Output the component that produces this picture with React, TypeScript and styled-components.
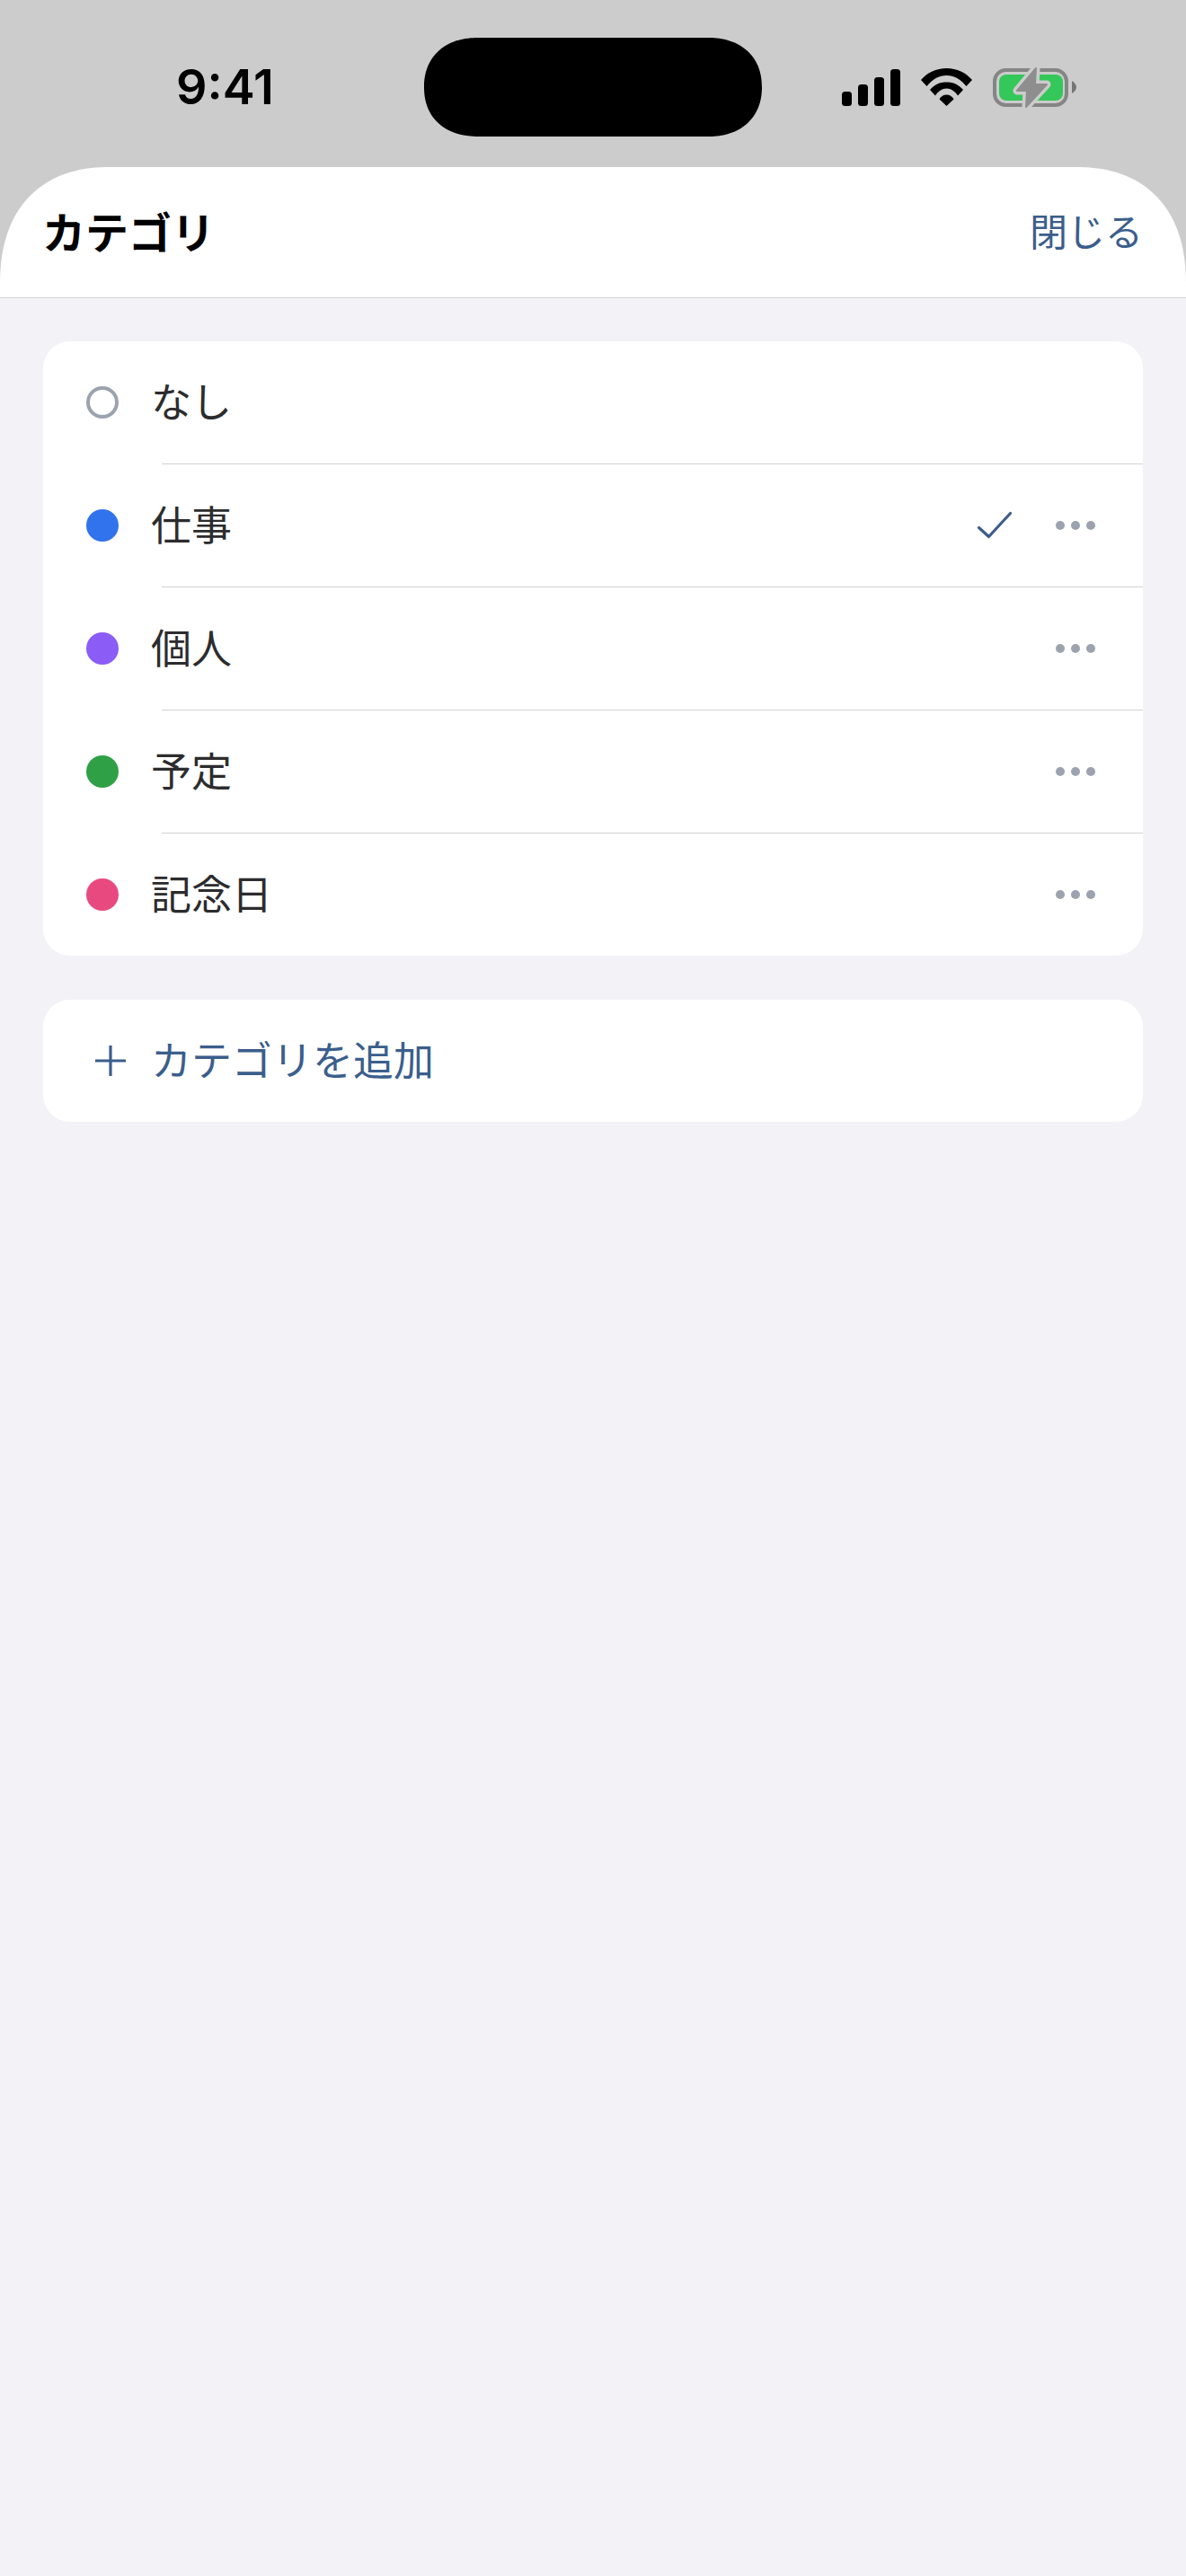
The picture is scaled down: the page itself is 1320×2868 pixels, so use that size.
import React from "react";
import styled, { createGlobalStyle } from "styled-components";

const Global = createGlobalStyle`
  html, body { margin: 0; padding: 0; background: #f2f2f7; }
  * { box-sizing: border-box; }
`;

const CJK = `"Noto Sans CJK JP", "Noto Sans", sans-serif`;

const Screen = styled.div`
  width: 1320px;
  height: 2868px;
  background: #f2f2f7;
  display: flex;
  flex-direction: column;
  font-family: ${CJK};
  overflow: hidden;
`;

const Top = styled.div`
  background: #cccccc;
`;

const StatusBar = styled.div`
  height: 186px;
  padding-top: 42px;
  display: grid;
  grid-template-columns: 472px 376px 1fr;
  grid-template-rows: 110px;
  align-items: center;
`;

const Time = styled.div`
  padding-left: 196px;
  font-family: Inter, "Liberation Sans", sans-serif;
  font-size: 54px;
  font-weight: 600;
  line-height: 1;
  color: #000;
`;

const Island = styled.div`
  width: 376px;
  height: 110px;
  background: #000;
  border-radius: 60px / 55px;
  corner-shape: superellipse(1.15);
`;

const StatusIcons = styled.div`
  padding-left: 89px;
  display: flex;
  align-items: center;
`;

const Header = styled.header`
  height: 145px;
  background: #fff;
  border-radius: 122px 122px 0 0 / 130px 130px 0 0;
  corner-shape: superellipse(1.2);
  display: flex;
  align-items: center;
  justify-content: space-between;
  padding: 0 48px 0 47px;
`;

const HeaderRule = styled.div`
  height: 1px;
  background: #d1d1d6;
`;

const Title = styled.h1`
  margin: 0 0 6px;
  font-size: 48px;
  font-weight: 700;
  line-height: 1;
  color: #000;
`;

const CloseButton = styled.button`
  border: 0;
  padding: 0 0 5px;
  background: none;
  font-family: ${CJK};
  font-size: 42px;
  line-height: 1;
  color: #3b5e8c;
`;

const Content = styled.main`
  padding: 48px 48px 0;
  display: flex;
  flex-direction: column;
  gap: 49px;
`;

const Card = styled.section`
  background: #fff;
  border-radius: 30px;
  overflow: hidden;
`;

const Row = styled.div`
  height: 136px;
  display: flex;
  align-items: center;
  padding: 0 53px 0 48px;
`;

const Dot = styled.span<{ $color?: string }>`
  width: 36px;
  height: 36px;
  border-radius: 50%;
  flex: none;
  background: ${(p) => p.$color ?? "transparent"};
  border: ${(p) => (p.$color ? "none" : "4px solid #9ca3af")};
`;

const Label = styled.span`
  margin-left: 36px;
  padding-bottom: 6px;
  font-size: 45px;
  line-height: 1;
  color: #2c2c2e;
`;

const Trailing = styled.div`
  margin-left: auto;
  display: flex;
  align-items: center;
  gap: 48px;
`;

const MoreDots = styled.div`
  display: flex;
  gap: 7px;
`;

const MoreDot = styled.span`
  width: 10px;
  height: 10px;
  border-radius: 50%;
  background: #9ca3af;
`;

const Separator = styled.div`
  height: 1px;
  margin-left: 132px;
  background: #d1d1d6;
`;

const AddRow = styled.div`
  height: 136px;
  display: flex;
  align-items: center;
  padding-left: 58px;
  gap: 28px;
`;

const AddLabel = styled.span`
  padding-bottom: 6px;
  font-size: 45px;
  line-height: 1;
  color: #3b5e8c;
`;

const Signal = () => (
  <svg width="65" height="41" viewBox="0 0 65 41" style={{ display: "block" }}>
    <rect x="0" y="25" width="11" height="16" rx="3.5" />
    <rect x="18" y="17" width="11" height="24" rx="3.5" />
    <rect x="36" y="9" width="11" height="32" rx="3.5" />
    <rect x="54" y="0" width="11" height="41" rx="3.5" />
  </svg>
);

const Wifi = () => (
  <svg width="57" height="42" viewBox="0 0 57 42" style={{ display: "block", marginLeft: 23 }}>
    <path d="M0 13C7 5 17 0 28.500 0S50 5 57 13L50.500 20C44 12 37 8 28.500 8S13 12 6.500 20Z" />
    <path d="M10 24C15 18 21 15.500 28.500 15.500S42 18 47 24L41 30.500C38 26 33.500 22.500 28.500 22.500S19 26 16 30.500Z" />
    <path d="M20.500 34.500C22.500 31 25 29.500 28.500 29.500S34.500 31 36.500 34.500L28.500 42Z" />
  </svg>
);

const Battery = () => (
  <svg width="93" height="48" viewBox="0 0 93 48" style={{ display: "block", marginLeft: 23 }}>
    <rect x="2" y="5" width="80" height="39" rx="12.500" fill="none" stroke="#858585" strokeWidth="4" />
    <rect x="7" y="10" width="71" height="29" rx="8" fill="#34c759" />
    <path d="M88 17C91 19 93 21 93 24S91 29 88 31Z" fill="#757575" />
    <path
      d="M48 3L27 28H38L37 46L60 21H47Z"
      fill="#cccccc"
      stroke="#cccccc"
      strokeWidth="9"
      strokeLinejoin="round"
    />
    <path
      d="M48 3L27 28H38L37 46L60 21H47Z"
      fill="#8e8e8e"
      stroke="#8e8e8e"
      strokeWidth="2"
      strokeLinejoin="round"
    />
  </svg>
);

const Check = () => (
  <svg width="40" height="32" viewBox="0 0 40 32" fill="none" style={{ display: "block" }}>
    <path d="M2.500 18.500L13.500 28.500L37.500 2.500" stroke="#3b5e8c" strokeWidth="3.200" strokeLinecap="round" strokeLinejoin="round" />
  </svg>
);

const Plus = () => (
  <svg width="34" height="34" viewBox="0 0 34 34" style={{ display: "block" }}>
    <path d="M0 17H34M17 0V34" stroke="#3b5e8c" strokeWidth="3.200" />
  </svg>
);

const categories = [
  { name: "なし" },
  { name: "仕事", color: "#3173ed", selected: true, more: true },
  { name: "個人", color: "#8b5cf6", more: true },
  { name: "予定", color: "#30a046", more: true },
  { name: "記念日", color: "#e84a80", more: true },
];

export default function App() {
  return (
    <Screen>
      <Global />
      <Top>
        <StatusBar>
          <Time>9:41</Time>
          <Island />
          <StatusIcons>
            <Signal />
            <Wifi />
            <Battery />
          </StatusIcons>
        </StatusBar>
        <Header>
          <Title>カテゴリ</Title>
          <CloseButton>閉じる</CloseButton>
        </Header>
        <HeaderRule />
      </Top>
      <Content>
        <Card>
          {categories.map((c, i) => (
            <React.Fragment key={c.name}>
              {i > 0 && <Separator />}
              <Row>
                <Dot $color={c.color} />
                <Label>{c.name}</Label>
                {c.more && (
                  <Trailing>
                    {c.selected && <Check />}
                    <MoreDots>
                      <MoreDot />
                      <MoreDot />
                      <MoreDot />
                    </MoreDots>
                  </Trailing>
                )}
              </Row>
            </React.Fragment>
          ))}
        </Card>
        <Card>
          <AddRow>
            <Plus />
            <AddLabel>カテゴリを追加</AddLabel>
          </AddRow>
        </Card>
      </Content>
    </Screen>
  );
}
